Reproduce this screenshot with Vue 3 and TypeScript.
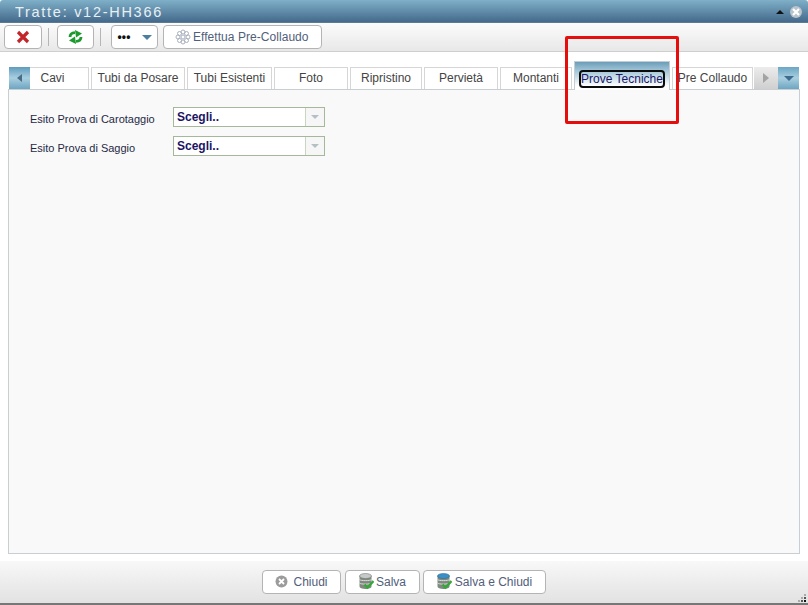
<script setup lang="ts">
interface Tab { label: string; width: number; active?: boolean }
const tabs: Tab[] = [
  { label: 'Cavi', width: 59 },
  { label: 'Tubi da Posare', width: 94 },
  { label: 'Tubi Esistenti', width: 85 },
  { label: 'Foto', width: 74 },
  { label: 'Ripristino', width: 72 },
  { label: 'Pervietà', width: 74 },
  { label: 'Montanti', width: 72 },
  { label: 'Prove Tecniche', width: 96, active: true },
  { label: 'Pre Collaudo', width: 81 },
]
const fields = ['Esito Prova di Carotaggio', 'Esito Prova di Saggio']
</script>

<template>
  <div class="window">
    <header class="titlebar">
      <span class="title">Tratte: v12-HH366</span>
      <div class="title-tools">
        <span class="collapse"></span>
        <span class="close">
          <svg width="12" height="12" viewBox="0 0 12 12"><path d="M3 3l6 6M9 3l-6 6" stroke="#fff" stroke-width="2.2" /></svg>
        </span>
      </div>
    </header>

    <div class="toolbar">
      <button class="btn btn-cancel">
        <svg width="14" height="14" viewBox="0 0 14 14"><path d="M2 2l10 10M12 2L2 12" stroke="#c4252a" stroke-width="3.2" /></svg>
      </button>
      <span class="sep"></span>
      <button class="btn btn-refresh">
        <svg width="17" height="14" viewBox="0 0 17 14" fill="#1d9a2d">
          <path d="M3 7C3 4.500 5 2.800 8 2.600" fill="none" stroke="#1d9a2d" stroke-width="2.800" />
          <path d="M8 0L15 3.500L9 7.500z" />
          <path d="M14 7C14 9.500 12 11.200 9 11.400" fill="none" stroke="#1d9a2d" stroke-width="2.800" />
          <path d="M9 14L2 10.500L8 6.500z" />
        </svg>
      </button>
      <span class="sep"></span>
      <button class="btn more-btn">
        <span class="dots">•••</span>
        <span class="more-arrow"></span>
      </button>
      <button class="btn effettua">
        <svg width="16" height="16" viewBox="0 0 16 16" fill="none" stroke="#aab0bf">
          <circle cx="8" cy="8" r="2" />
          <circle cx="8" cy="3" r="2" /><circle cx="8" cy="13" r="2" />
          <circle cx="3" cy="8" r="2" /><circle cx="13" cy="8" r="2" />
          <circle cx="4.500" cy="4.500" r="2" /><circle cx="11.500" cy="4.500" r="2" />
          <circle cx="4.500" cy="11.500" r="2" /><circle cx="11.500" cy="11.500" r="2" />
        </svg>
        Effettua Pre-Collaudo
      </button>
    </div>

    <main class="body">
      <div class="tabstrip">
        <span class="scroll scroll-left"><i class="tri-left"></i></span>
        <div
          v-for="tab in tabs"
          :key="tab.label"
          class="tab"
          :class="{ active: tab.active }"
          :style="{ width: tab.width + 'px' }"
        >
          <span class="tab-label">{{ tab.label }}</span>
        </div>
        <span class="scroll scroll-right"><i class="tri-right"></i></span>
        <span class="scroll scroll-menu"><i class="tri-down"></i></span>
      </div>
      <section class="panel">
        <div v-for="field in fields" :key="field" class="field">
          <label>{{ field }}</label>
          <div class="select">
            <span class="value">Scegli..</span>
            <span class="select-btn"><i></i></span>
          </div>
        </div>
      </section>
    </main>

    <footer class="footer">
      <button class="btn foot-btn chiudi">
        <svg width="13" height="13" viewBox="0 0 13 13">
          <circle cx="6.500" cy="6.500" r="6" fill="#9b9b9b" />
          <path d="M4 4l5 5M9 4l-5 5" stroke="#fff" stroke-width="1.800" />
        </svg>
        Chiudi
      </button>
      <button class="btn foot-btn salva">
        <svg width="15" height="17" viewBox="0 0 15 17">
          <path d="M0.500 3v10.500c0 1.500 2.500 2.500 6 2.500s6-1 6-2.500V3z" fill="#7f897f" />
          <ellipse cx="6.500" cy="3" rx="6" ry="2.500" fill="#c6cac6" stroke="#777" stroke-width=".6" />
          <path d="M0.500 6.500c1 1.500 11 1.500 12 0M0.500 10c1 1.500 11 1.500 12 0" stroke="#ddd" fill="none" />
          <path d="M5.500 11.500l3 3 6-6.500" stroke="#35a83a" stroke-width="2.400" fill="none" />
        </svg>
        Salva
      </button>
      <button class="btn foot-btn salva-chiudi">
        <svg width="15" height="17" viewBox="0 0 15 17">
          <path d="M0.500 3v10.500c0 1.500 2.500 2.500 6 2.500s6-1 6-2.500V3z" fill="#7f897f" />
          <ellipse cx="6.500" cy="3" rx="6" ry="2.500" fill="#3b8fc4" stroke="#2a6f9f" stroke-width=".6" />
          <path d="M0.500 6.500c1 1.500 11 1.500 12 0M0.500 10c1 1.500 11 1.500 12 0" stroke="#ddd" fill="none" />
          <path d="M5.500 11.500l3 3 6-6.500" stroke="#35a83a" stroke-width="2.400" fill="none" />
        </svg>
        Salva e Chiudi
      </button>
      <span class="grip">
        <i></i><i></i><i></i><i></i><i></i><i></i>
      </span>
    </footer>

    <div class="highlight"></div>
  </div>
</template>

<style>
html, body { margin: 0; padding: 0; background: #fff; }
</style>

<style scoped>
.window {
  position: relative;
  width: 808px;
  height: 605px;
  display: flex;
  flex-direction: column;
  overflow: hidden;
  font-family: "Liberation Sans", Arial, sans-serif;
  background: #fff;
}
.titlebar {
  height: 22px;
  flex: none;
  display: flex;
  align-items: center;
  justify-content: space-between;
  padding: 0 6px 0 15px;
  background: linear-gradient(#7fb0c8, #44698c);
  border-radius: 3px 3px 0 0;
  box-sizing: border-box;
}
.title {
  color: #e8f0f4;
  font-size: 14.5px;
  letter-spacing: 1.72px;
  position: relative;
  top: 1px;
}
.title-tools { display: flex; align-items: center; gap: 6px; position: relative; top: 1px; }
.collapse {
  width: 0; height: 0;
  border-left: 4px solid transparent;
  border-right: 4px solid transparent;
  border-bottom: 4px solid #111;
}
.close {
  width: 12px; height: 12px;
  border-radius: 50%;
  background: #b9c4cc;
  display: flex; align-items: center; justify-content: center;
}
.toolbar {
  height: 30px;
  flex: none;
  box-sizing: border-box;
  display: flex;
  align-items: flex-start;
  padding: 2px 0 0 4px;
  background: linear-gradient(#fbfbfb, #e8e8e8);
  border-top: 1px solid #5b7b92;
  border-bottom: 1px solid #cfcfcf;
}
.btn {
  box-sizing: border-box;
  height: 24px;
  border: 1px solid #b4b4b4;
  border-radius: 4px;
  background: #fff;
  display: flex;
  align-items: center;
  justify-content: center;
  padding: 0;
  font: 12px "Liberation Sans", Arial, sans-serif;
  color: #51607a;
}
.btn-cancel { width: 38px; }
.btn-refresh { width: 37px; }
.sep { width: 1px; height: 18px; background: #b5b5b5; margin: 3px 8px 0 6px; }
.btn-refresh + .sep { margin-right: 10px; }
.more-btn { width: 47px; gap: 11px; margin-right: 5px; }
.dots { font-size: 12px; font-weight: bold; color: #111; letter-spacing: .2px; line-height: 12px; }
.more-arrow {
  width: 0; height: 0;
  border-left: 5px solid transparent;
  border-right: 5px solid transparent;
  border-top: 5px solid #4d7ea0;
}
.effettua {
  width: 159px;
  gap: 2px;
  justify-content: flex-start;
  padding-left: 11px;
  letter-spacing: .05px;
}
.body {
  flex: 1;
  min-height: 0;
  background: #fff;
  padding: 9px 8px 7px 8px;
  display: flex;
  flex-direction: column;
}
.tabstrip {
  height: 28px;
  flex: none;
  display: flex;
  align-items: flex-end;
  gap: 2px;
  box-sizing: border-box;
  padding-left: 1px;
  position: relative;
  z-index: 1;
}
.scroll {
  height: 22px;
  display: flex;
  align-items: center;
  justify-content: center;
  flex: none;
}
.scroll-left {
  width: 21px;
  margin-right: -2px;
  background: linear-gradient(#5f9cbd, #a9cfe0 50%, #6ea5c2);
}
.scroll-right {
  width: 24px;
  margin-left: -1px;
  margin-right: -2px;
  background: linear-gradient(#ececec, #cfcfcf);
}
.scroll-menu {
  width: 21px;
  background: linear-gradient(#6ba6c4, #a9cfe0 50%, #6ea5c2);
}
.tri-left, .tri-right, .tri-down { display: block; width: 0; height: 0; }
.tri-left {
  border-top: 4px solid transparent;
  border-bottom: 4px solid transparent;
  border-right: 5px solid #4a6c85;
}
.tri-right {
  border-top: 5px solid transparent;
  border-bottom: 5px solid transparent;
  border-left: 6px solid #a3a3a3;
}
.tri-down {
  border-left: 5px solid transparent;
  border-right: 5px solid transparent;
  border-top: 5px solid #3e6b8e;
}
.tab {
  box-sizing: border-box;
  height: 22px;
  flex: none;
  border: 1px solid #d6d6d6;
  border-bottom: none;
  background: #fff;
  display: flex;
  align-items: center;
  justify-content: center;
  padding-bottom: 2px;
  font-size: 12px;
  color: #444;
  white-space: nowrap;
}
.scroll-left + .tab { border-left: none; padding-right: 13px; }
.tab.active {
  border-color: #c3cdd3;
  background: linear-gradient(#6c9db8 0, #9dc3d6 8px, #ffffff 24px);
  padding: 5px 0 0;
  margin-bottom: -1px;
  height: 29px;
  position: relative;
}
.tab.active .tab-label {
  color: #1a1a6c;
  border: 2px solid #0b0b0b;
  border-radius: 4px;
  line-height: 14px;
}
.panel {
  flex: 1;
  box-sizing: border-box;
  border: 1px solid #c8cfd3;
  background: #f9f9fa;
  padding: 17px 21px;
}
.field { display: flex; align-items: center; height: 20px; margin-bottom: 9px; }
.field label {
  width: 143px;
  font-size: 11px;
  color: #1f2a44;
  position: relative;
  top: 2px;
}
.select {
  box-sizing: border-box;
  width: 152px;
  height: 20px;
  display: flex;
  border: 1px solid #a5b89a;
  background: #fff;
}
.value {
  flex: 1;
  font-size: 12px;
  font-weight: bold;
  color: #1b1464;
  padding-left: 3px;
  line-height: 18px;
}
.select-btn {
  width: 18px;
  border-left: 1px solid #c9d4c2;
  display: flex;
  align-items: center;
  justify-content: center;
  background: #f6f6f6;
}
.select-btn i {
  display: block; width: 0; height: 0;
  border-left: 4px solid transparent;
  border-right: 4px solid transparent;
  border-top: 4px solid #b5bfc6;
}
.footer {
  position: relative;
  height: 44px;
  flex: none;
  box-sizing: border-box;
  display: flex;
  align-items: center;
  justify-content: flex-start;
  gap: 4px;
  padding: 0 0 1px 262px;
  background: linear-gradient(#f8f8f8, #e2e2e2);
  border-bottom: 2px solid #777;
}
.foot-btn { gap: 2px; }
.chiudi { width: 79px; gap: 5px; }
.salva { width: 75px; margin-right: -1px; }
.salva-chiudi { width: 123px; gap: 3px; }
.grip {
  position: absolute;
  right: 2px;
  bottom: 1px;
  width: 10px;
  height: 10px;
  display: block;
}
.grip i { position: absolute; width: 2px; height: 2px; background: #555; }
.grip i:nth-child(1) { right: 0; bottom: 0; background: #111; }
.grip i:nth-child(2) { right: 3px; bottom: 0; }
.grip i:nth-child(3) { right: 6px; bottom: 0; background: #aaa; }
.grip i:nth-child(4) { right: 0; bottom: 3px; }
.grip i:nth-child(5) { right: 3px; bottom: 3px; background: #aaa; }
.grip i:nth-child(6) { right: 0; bottom: 6px; background: #aaa; }
.highlight {
  position: absolute;
  left: 565px;
  top: 36px;
  width: 114px;
  height: 88px;
  box-sizing: border-box;
  border: 3px solid #e60d0d;
  border-radius: 2px;
  pointer-events: none;
  z-index: 5;
}
</style>
